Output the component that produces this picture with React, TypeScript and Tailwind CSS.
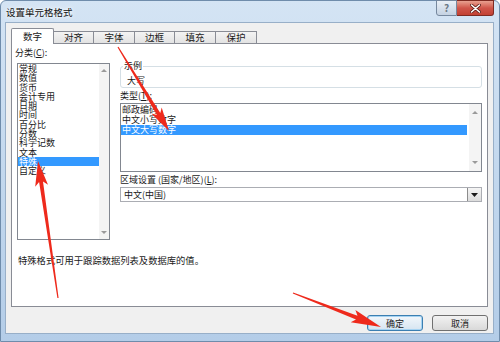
import React from "react";

const categories = ["常规", "数值", "货币", "会计专用", "日期", "时间", "百分比", "分数", "科学记数", "文本", "特殊", "自定义"];
const types = ["邮政编码", "中文小写数字", "中文大写数字"];
const tabs = [
  { label: "数字", w: "w-[43px]" },
  { label: "对齐", w: "w-[41px]" },
  { label: "字体", w: "w-[42px]" },
  { label: "边框", w: "w-[41px]" },
  { label: "填充", w: "w-[42px]" },
  { label: "保护", w: "w-[42px]" },
];

type Pt = [number, number];

// red annotation arrow, tapering shaft + head
function arrowPoints(tail: Pt, tip: Pt, headLen = 22, headW = 12) {
  const dx = tip[0] - tail[0];
  const dy = tip[1] - tail[1];
  const len = Math.hypot(dx, dy);
  const ux = dx / len;
  const uy = dy / len;
  const nx = -uy;
  const ny = ux;
  const neck: Pt = [tip[0] - ux * (headLen - 4), tip[1] - uy * (headLen - 4)];
  const base: Pt = [tip[0] - ux * headLen, tip[1] - uy * headLen];
  const p = (b: Pt, w: number): string => `${(b[0] + nx * w).toFixed(1)},${(b[1] + ny * w).toFixed(1)}`;
  return [
    p(tail, 0.6),
    p(neck, 2),
    p(base, headW / 2),
    `${tip[0]},${tip[1]}`,
    p(base, -headW / 2),
    p(neck, -2),
    p(tail, -0.6),
  ].join(" ");
}

function ScrollArrow({ up }: { up?: boolean }) {
  return (
    <svg width="6" height="4" viewBox="0 0 6 4">
      <path d={up ? "M0 4 L3 1 L6 4 Z" : "M0 0 L3 3 L6 0 Z"} fill="#9a9a9a" />
    </svg>
  );
}

export default function App() {
  return (
    <div
      className="relative w-[500px] h-[342px] overflow-hidden text-[9px] text-[#1a1a1a]"
      style={{ fontFamily: '"Noto Sans CJK SC", "Noto Sans", sans-serif' }}
    >
      <div className="w-[500px] h-[342px] flex flex-col rounded-t-[6px] border border-[#6f8cab] bg-gradient-to-b from-[#d4e4f4] via-[#c3d8ee] to-[#b4cde8]">
        {/* 标题栏 */}
        <div className="h-[21px] flex items-start justify-between">
          <div className="pl-[5px] pt-[5px] leading-[12px] text-[9.5px] text-[#111] [text-shadow:0_0_6px_#ffffff,0_0_3px_#ffffff]">
            设置单元格格式
          </div>
          <div className="flex mr-[5px] -mt-px">
            <div className="w-[21px] h-[16px] flex items-center justify-center rounded-bl-[3px] border border-[#76889e] bg-gradient-to-b from-[#e9eff6] to-[#c4d2e2] text-[10px] leading-none font-bold text-[#6a7785]">
              ?
            </div>
            <div className="w-[37px] h-[16px] flex items-center justify-center rounded-br-[3px] border border-l-0 border-[#7e2a22] bg-gradient-to-b from-[#e8a090] via-[#d0554a] to-[#c24133]">
              <svg width="11" height="9" viewBox="0 0 11 9">
                <path d="M1.5 1 L9.5 8 M9.5 1 L1.5 8" stroke="#5a1a14" strokeWidth="3" strokeLinecap="round" />
                <path d="M1.5 1 L9.5 8 M9.5 1 L1.5 8" stroke="#ffffff" strokeWidth="1.6" strokeLinecap="round" />
              </svg>
            </div>
          </div>
        </div>

        {/* 内容区 */}
        <div className="ml-[4px] mr-[5px] h-[312px] bg-[#f0f0f0] border border-[#98afc8] flex flex-col">
          {/* 选项卡 */}
          <div className="flex items-start pl-[5px] pt-[5px] h-[21px] relative z-10 text-[9.5px]">
            {tabs.map((t, i) =>
              i === 0 ? (
                <div
                  key={t.label}
                  className={`${t.w} h-[16px] bg-white border border-b-0 border-[#898c95] rounded-t-[2px] flex items-center justify-center leading-none`}
                >
                  {t.label}
                </div>
              ) : (
                <div
                  key={t.label}
                  className={`${t.w} h-[12px] mt-[3px] -ml-px bg-gradient-to-b from-[#f3f3f3] to-[#e3e3e3] border border-b-0 border-[#898c95] flex items-center justify-center leading-none`}
                >
                  {t.label}
                </div>
              )
            )}
          </div>

          {/* 选项卡面板 */}
          <div className="mx-[5px] -mt-[1px] h-[264px] bg-white border border-[#898c95] flex flex-col px-[5px] pt-[4px]">
            <div className="flex gap-[10px]">
              {/* 分类 */}
              <div className="w-[93px] flex flex-col">
                <div className="h-[15px] -ml-[2px] leading-[10px]">
                  分类(<span className="underline">C</span>):
                </div>
                <div className="h-[177px] border border-[#828790] flex">
                  <div className="flex-1 flex flex-col">
                    {categories.map((c) => (
                      <div
                        key={c}
                        className={`h-[9.3px] leading-[9.3px] pl-[1px] whitespace-nowrap ${
                          c === "特殊" ? "bg-[#3399ff] text-white" : ""
                        }`}
                      >
                        {c}
                      </div>
                    ))}
                  </div>
                  <div className="w-[10px] bg-[#f4f4f4] flex flex-col items-center justify-between py-[4px]">
                    <ScrollArrow up />
                    <ScrollArrow />
                  </div>
                </div>
              </div>

              {/* 右侧 */}
              <div className="flex-1 flex flex-col">
                <div className="relative mt-[18px] h-[22px] border border-[#d5dfe5] rounded-[3px]">
                  <span className="absolute -top-[6px] left-[2px] bg-white px-px leading-[10px]">示例</span>
                  <div className="pl-[6px] pt-[9px] leading-[9px]">大写</div>
                </div>
                <div className="mt-[2px] h-[13px] leading-[11px]">
                  类型(<span className="underline">T</span>):
                </div>
                <div className="h-[69px] border border-[#828790] flex">
                  <div className="flex-1 flex flex-col pt-px pr-[2px]">
                    {types.map((t) => (
                      <div
                        key={t}
                        className={`h-[10px] leading-[10px] pl-[1px] ${
                          t === "中文大写数字" ? "bg-[#3399ff] text-white" : ""
                        }`}
                      >
                        {t}
                      </div>
                    ))}
                  </div>
                  <div className="w-[12px] bg-[#f4f4f4] flex flex-col items-center justify-between py-[6px]">
                    <ScrollArrow up />
                    <ScrollArrow />
                  </div>
                </div>
                <div className="h-[15px] flex items-center">
                  区域设置 (国家/地区)(<span className="underline">L</span>):
                </div>
                <div className="h-[15px] border border-[#abadb3] flex items-stretch">
                  <div className="flex-1 pl-[3px] flex items-center">中文(中国)</div>
                  <div className="w-[14px] border-l border-[#8c8c8c] bg-gradient-to-b from-[#f5f5f5] to-[#dcdcdc] flex items-center justify-center">
                    <svg width="7" height="4" viewBox="0 0 7 4">
                      <path d="M0 0 L7 0 L3.5 4 Z" fill="#1a1a1a" />
                    </svg>
                  </div>
                </div>
              </div>
            </div>

            <div className="mt-[14px] h-[12px] leading-[12px] pl-[1px] text-[9.3px]">特殊格式可用于跟踪数据列表及数据库的值。</div>
          </div>

          {/* 按钮 */}
          <div className="mt-[8px] flex justify-end gap-[9px] pr-[5px]">
            <button className="w-[56px] h-[16px] rounded-[3px] border border-[#3c7fb1] bg-gradient-to-b from-[#f2f7fb] to-[#d6e5f1] shadow-[inset_0_0_0_1px_#a5d3f2] leading-none text-[9px]">
              确定
            </button>
            <button className="w-[56px] h-[16px] rounded-[3px] border border-[#707070] bg-gradient-to-b from-[#f2f2f2] to-[#d9d9d9] leading-none text-[9px]">
              取消
            </button>
          </div>
        </div>
      </div>

      {/* 红色标注箭头 */}
      <svg className="absolute inset-0 pointer-events-none" width="500" height="342" viewBox="0 0 500 342">
        <polygon points={arrowPoints([118, 47], [169, 131], 24, 12)} fill="#ee2a1c" />
        <polygon points={arrowPoints([58, 298], [38, 161], 25, 13)} fill="#ee2a1c" />
        <polygon points={arrowPoints([293, 293], [381, 327], 30, 13)} fill="#ee2a1c" />
      </svg>
    </div>
  );
}
